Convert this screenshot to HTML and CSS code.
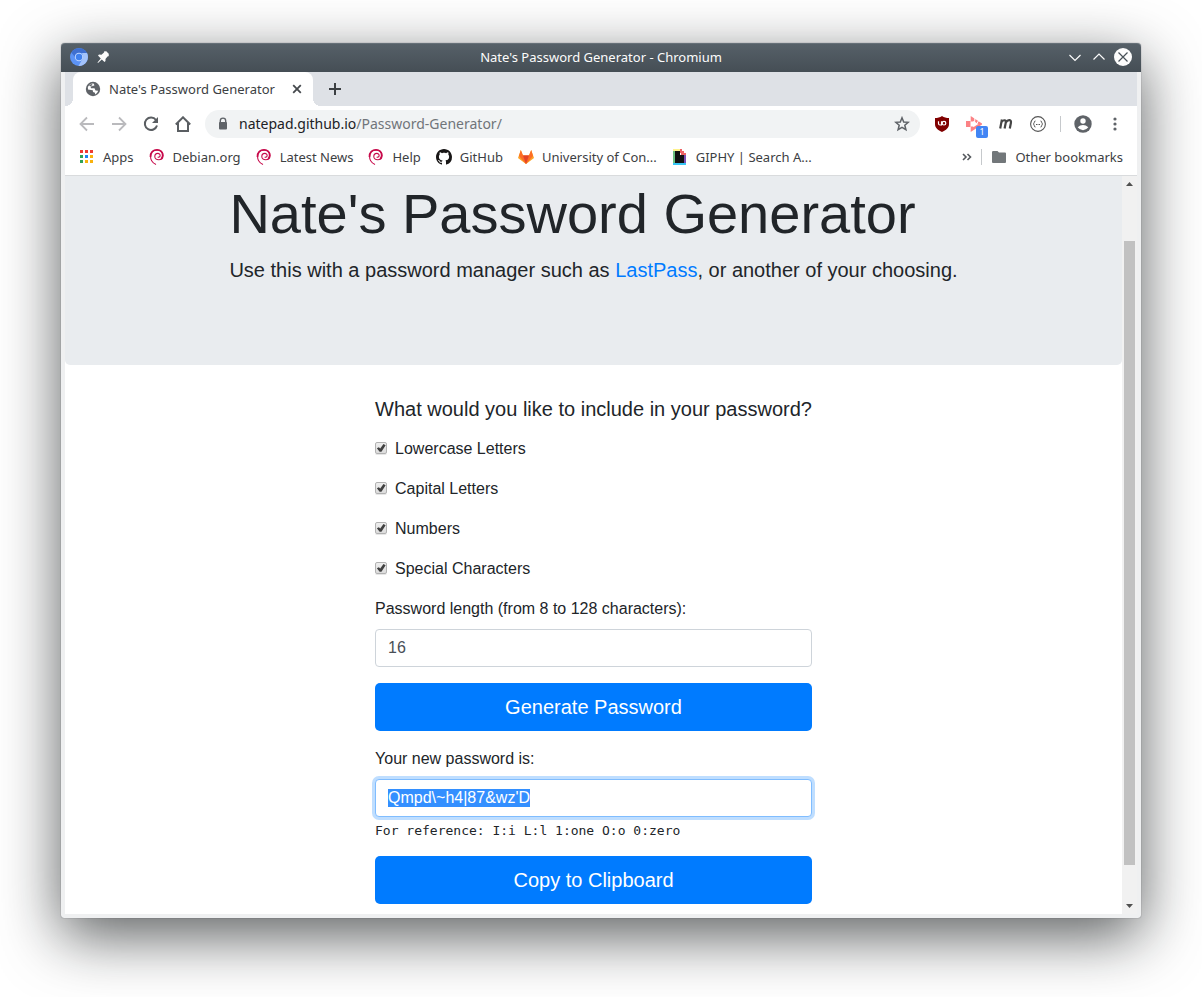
FILE: index.html
```html
<!DOCTYPE html>
<html lang="en">
<head>
<meta charset="utf-8">
<title>Nate's Password Generator</title>
<link rel="stylesheet" href="styles.css">
</head>
<body>
<svg class="defs" aria-hidden="true">
  <symbol id="debian" viewBox="0 0 16 16">
    <path d="M7 15.500C3.600 14 1.500 10.500 1.500 7C1.500 3 4.500 1 8.200 1C12 1 14 3.600 14 6.500C14 9.500 12 10.800 9.700 10.800C7.300 10.800 5.800 9.500 5.800 7.500C5.800 5.500 7.200 4.400 8.800 4.400C10.300 4.400 11.300 5.400 11.100 6.800C10.900 8 9.700 8.600 8.700 8" fill="none" stroke="#c70a4b" stroke-width="1.100"/>
    <path d="M1.500 8C1.300 3 4.500 .9 8 .9C11.500 .9 13.800 3 13.700 6.500C13.600 8 13 9 12 9.800" fill="none" stroke="#c70a4b" stroke-width="1.700"/>
  </symbol>
</svg>
<div class="window">
  <header class="titlebar">
    <div class="titlebar-side">
      <svg width="18" height="18" viewBox="0 0 18 18"><circle cx="9" cy="9" r="9" fill="#5c93f5"/><path d="M1.300 4.500A9 9 0 0 1 17 5H9A4 4 0 0 0 5 9Z" fill="#3f6fd0"/><path d="M17 5A9 9 0 0 1 8.500 18L12.500 11Q14 8 12 5Z" fill="#a3c3fb"/><circle cx="9" cy="9" r="4.200" fill="#bdd4ff"/><circle cx="9" cy="9" r="3.200" fill="#3f80ee"/></svg>
      <svg width="14" height="14" viewBox="0 0 14 14" fill="#fcfcfc"><path d="M8.500 1L9.300 1.500L10 1L13 4L12.500 5L13 6L11.500 6.500L9.500 9L9.500 11L8.500 12L5.800 9.500L2 13L1.500 12.500L4.800 8.500L2 5.500L3 4.600L5.500 4.700L8 2.500Z"/></svg>
    </div>
    <span class="titlebar-text">Nate's Password Generator - Chromium</span>
    <div class="titlebar-side titlebar-controls">
      <button type="button" aria-label="Minimize"><svg width="18" height="18" viewBox="0 0 18 18"><path d="M3.500 7L9 12.500L14.500 7" fill="none" stroke="#fcfcfc" stroke-width="1.200"/></svg></button>
      <button type="button" aria-label="Maximize"><svg width="18" height="18" viewBox="0 0 18 18"><path d="M3.500 11.500L9 6L14.500 11.500" fill="none" stroke="#fcfcfc" stroke-width="1.200"/></svg></button>
      <button type="button" aria-label="Close"><svg width="18" height="18" viewBox="0 0 18 18"><circle cx="9" cy="9" r="9" fill="#fcfcfc"/><path d="M4.500 4.500L13.500 13.500M13.500 4.500L4.500 13.500" stroke="#475057" stroke-width="1.200"/></svg></button>
    </div>
  </header>
  <div class="browser">
    <div class="tabs">
      <div class="tab">
        <svg width="16" height="16" viewBox="0 0 16 16"><circle cx="8" cy="8" r="7.200" fill="#5f6368"/><path d="M8.500 2.500L9.500 4.200L8 5L5.500 5.500L6 7.200L9.500 7.200L10.500 9.500L13.200 9.800Q12.500 12.300 10 13.500L10 11.800L8 11L7.800 9.300L3 8.500Q2.300 5.500 4.500 3.800Q6 2.400 8.500 2.500Z" fill="#fff"/><path d="M4 4L7 3L7.500 4.200L5 5.300ZM2.500 9.500L6.500 10.200L7.300 13L5 13Z" fill="#5f6368"/></svg>
        <span class="tab-title">Nate's Password Generator</span>
        <button type="button" aria-label="Close tab"><svg width="10" height="10" viewBox="0 0 10 10"><path d="M1.200 1.200L8.800 8.800M8.800 1.200L1.200 8.800" stroke="#45494d" stroke-width="1.800"/></svg></button>
      </div>
      <button type="button" class="new-tab" aria-label="New tab"><svg width="12" height="12" viewBox="0 0 12 12"><path d="M6 0V12M0 6H12" stroke="#3c4043" stroke-width="2"/></svg></button>
    </div>
    <nav class="toolbar" aria-label="Browser">
      <button type="button" aria-label="Back"><svg width="16" height="16" viewBox="0 0 16 16"><path d="M15 8H2M8 1.500L1.500 8L8 14.500" fill="none" stroke="#bababd" stroke-width="1.800"/></svg></button>
      <button type="button" aria-label="Forward"><svg width="16" height="16" viewBox="0 0 16 16"><path d="M1 8H14M8 1.500L14.500 8L8 14.500" fill="none" stroke="#bababd" stroke-width="1.800"/></svg></button>
      <button type="button" aria-label="Reload"><svg width="16" height="16" viewBox="0 0 16 16"><path d="M13 4A6.200 6.200 0 1 0 14 9.500" fill="none" stroke="#5a5e62" stroke-width="2"/><path d="M15 1V7H9Z" fill="#5a5e62"/></svg></button>
      <button type="button" aria-label="Home"><svg width="16" height="16" viewBox="0 0 16 16"><path d="M0.800 8.500L8 1.300L15.200 8.500M3 7V15H13V7" fill="none" stroke="#5a5e62" stroke-width="2"/></svg></button>
      <div class="omnibox">
        <svg width="16" height="16" viewBox="0 0 16 16"><path d="M5.300 7V4.800A2.700 2.700 0 0 1 10.700 4.800V7" fill="none" stroke="#5f6368" stroke-width="1.400"/><rect x="4" y="6" width="8" height="7.500" rx="1" fill="#5f6368"/></svg>
        <span class="url">natepad.github.io<span class="url-path">/Password-Generator/</span></span>
        <button type="button" aria-label="Bookmark this page"><svg width="16" height="16" viewBox="0 0 16 16"><path d="M8 1.800L9.700 6L14.200 6.300L10.800 9.200L11.900 13.700L8 11.300L4.100 13.700L5.200 9.200L1.800 6.300L6.300 6Z" fill="none" stroke="#5f6368" stroke-width="1.500"/></svg></button>
      </div>
      <button type="button" aria-label="uBlock Origin"><svg width="16" height="16" viewBox="0 0 16 16"><path d="M8 0C6 1.600 3.500 2 1 2V8C1 12 4 14 8 16C12 14 15 12 15 8V2C12.500 2 10 1.600 8 0Z" fill="#800000"/><path d="M4.500 5.200V7.500Q4.500 9 6 9H7.500V5.200" fill="none" stroke="#fff" stroke-width="1.200"/><circle cx="10" cy="7.200" r="1.800" fill="none" stroke="#fff" stroke-width="1.200"/></svg></button>
      <button type="button" class="badged" aria-label="Video downloader"><svg width="16" height="16" viewBox="0 0 16 16"><path d="M0 5H4.500V11H0Z" fill="#fb8285"/><path d="M6 5.500V2.500L14.500 8L6 13.500V10.500" fill="none" stroke="#fb8285" stroke-width="2.600"/><path d="M9 1L8.500 7M13 4L10 9" stroke="#fff"/></svg><span class="badge">1</span></button>
      <button type="button" aria-label="Extension m"><svg width="16" height="16" viewBox="0 0 16 16"><path d="M2.200 12.500L3.900 3.500M3.500 6Q5.200 3.900 6.800 4.300Q8.200 4.700 7.700 7L6.600 12.500M7.700 6.500Q9.600 3.900 11.500 4.200Q13.400 4.500 12.900 7L11.800 12.500" fill="none" stroke="#454545" stroke-width="2.200"/></svg></button>
      <button type="button" aria-label="Extension braces"><svg width="16" height="16" viewBox="0 0 16 16" fill="none" stroke="#555"><circle cx="8" cy="8" r="7.400" stroke-width="1.100"/><path d="M5.500 5Q4.300 5 4.300 6.300T3.300 8Q4.300 8.300 4.300 9.700T5.500 11M10.500 5Q11.700 5 11.700 6.300T12.700 8Q11.700 8.300 11.700 9.700T10.500 11"/><path d="M6 8.500H10" stroke-dasharray="1 .5"/></svg></button>
      <span class="divider"></span>
      <button type="button" class="profile" aria-label="Profile"><svg width="18" height="18" viewBox="0 0 18 18"><circle cx="9" cy="9" r="8.700" fill="#5f6368"/><circle cx="9" cy="6" r="2.700" fill="#fff"/><path d="M3.700 12.300Q6 10 9 10T14.300 12.300Q12.200 15.200 9 15.200T3.700 12.300Z" fill="#fff"/></svg></button>
      <button type="button" aria-label="Menu"><svg width="16" height="16" viewBox="0 0 16 16" fill="#5f6368"><circle cx="8" cy="3" r="1.600"/><circle cx="8" cy="8" r="1.600"/><circle cx="8" cy="13" r="1.600"/></svg></button>
    </nav>
    <nav class="bookmarks" aria-label="Bookmarks">
      <a href="#"><svg width="16" height="16" viewBox="0 0 16 16"><path d="M1 1h3v3H1zM6 1h3v3H6zM11 1h3v3h-3z" fill="#ee3b33"/><path d="M1 6h3v3H1zM1 11h3v3H1z" fill="#2fa255"/><path d="M6 6h3v3H6z" fill="#1a84f2"/><path d="M11 6h3v3h-3zM6 11h3v3H6zM11 11h3v3h-3z" fill="#f9b10c"/></svg>Apps</a>
      <a href="#"><svg width="16" height="16"><use href="#debian"/></svg>Debian.org</a>
      <a href="#"><svg width="16" height="16"><use href="#debian"/></svg>Latest News</a>
      <a href="#"><svg width="16" height="16"><use href="#debian"/></svg>Help</a>
      <a href="#"><svg width="16" height="16" viewBox="0 0 16 16"><path fill="#181616" d="M8 0C3.580 0 0 3.580 0 8c0 3.540 2.290 6.530 5.470 7.590.4.070.55-.17.55-.38 0-.19-.01-.82-.01-1.490-2.010.37-2.530-.49-2.690-.94-.09-.23-.48-.94-.82-1.130-.28-.15-.68-.52-.01-.53.63-.01 1.080.58 1.230.82.72 1.210 1.870.87 2.330.66.07-.52.28-.87.51-1.070-1.780-.2-3.640-.89-3.640-3.950 0-.87.31-1.590.82-2.150-.08-.2-.36-1.020.08-2.120 0 0 .67-.21 2.200.82.64-.18 1.320-.27 2-.27s1.360.09 2 .27c1.530-1.040 2.200-.82 2.200-.82.44 1.100.16 1.920.08 2.120.51.56.82 1.270.82 2.150 0 3.070-1.870 3.750-3.650 3.950.29.25.54.73.54 1.480 0 1.070-.01 1.930-.01 2.200 0 .21.15.46.55.38A8.010 8.010 0 0 0 16 8c0-4.420-3.580-8-8-8z"/></svg>GitHub</a>
      <a href="#"><svg width="16" height="16" viewBox="0 0 16 16"><path d="M8 15L0 9L2.800 1L5 6.500H11L13.200 1L16 9Z" fill="#fca326"/><path d="M8 15L1 7L2.800 1L5 6.500H11L13.200 1L15 7Z" fill="#fc6d26"/><path d="M8 15L5 6.500H11Z" fill="#e24329"/></svg>University of Con...</a>
      <a href="#"><svg width="16" height="16" viewBox="0 0 16 16"><path d="M1 2h2v12H1z" fill="#6bbf80"/><path d="M1 0h7v2H1z" fill="#fff28c"/><path d="M12 6h2v8h-2z" fill="#7b4fb5"/><path d="M1 14h13v2H1z" fill="#35c5f5"/><path d="M3 2h5v4h4v8H3z" fill="#121212"/><path d="M8 0h2v2h2v2h2v2H9V4H8z" fill="#ef6265"/></svg>GIPHY | Search A...</a>
      <button type="button" class="more" aria-label="More bookmarks"><svg width="10" height="10" viewBox="0 0 10 10"><path d="M1 2L4 5L1 8M5.500 2L8.500 5L5.500 8" fill="none" stroke="#55595e" stroke-width="1.600"/></svg></button>
      <span class="divider"></span>
      <a href="#"><svg width="16" height="16" viewBox="0 0 16 16"><path d="M2.200 2H6.500L8 3.500H14Q15 3.500 15 4.500V13Q15 14 14 14H2Q1 14 1 13V3.200Q1 2 2.200 2Z" fill="#72777a"/></svg>Other bookmarks</a>
    </nav>
    <div class="viewport">
      <main class="page">
        <section class="hero">
          <div class="hero-text">
            <h1>Nate's Password Generator</h1>
            <p>Use this with a password manager such as <a href="#">LastPass</a>, or another of your choosing.</p>
          </div>
        </section>
        <form class="form">
          <p class="question">What would you like to include in your password?</p>
          <label class="check"><input type="checkbox" checked>Lowercase Letters</label>
          <label class="check"><input type="checkbox" checked>Capital Letters</label>
          <label class="check"><input type="checkbox" checked>Numbers</label>
          <label class="check"><input type="checkbox" checked>Special Characters</label>
          <div class="field">
            <label for="length">Password length (from 8 to 128 characters):</label>
            <input id="length" type="text" inputmode="numeric" value="16">
          </div>
          <button type="button" class="primary">Generate Password</button>
          <div class="field">
            <label for="password">Your new password is:</label>
            <input id="password" class="result" type="text" spellcheck="false" value="Qmpd\~h4|87&amp;wz'D">
            <small>For reference: I:i L:l 1:one O:o 0:zero</small>
          </div>
          <button type="button" class="primary">Copy to Clipboard</button>
        </form>
      </main>
      <div class="scrollbar" aria-hidden="true">
        <svg width="15" height="15" viewBox="0 0 15 15"><path d="M4 10L7.500 6L11 10Z" fill="#505050"/></svg>
        <div class="track"><div class="thumb"></div></div>
        <svg width="15" height="15" viewBox="0 0 15 15"><path d="M4 5L7.500 9L11 5Z" fill="#505050"/></svg>
      </div>
    </div>
  </div>
</div>
<script src="script.js"></script>
</body>
</html>
```
FILE: script.js
```js
document.getElementById('password').select();
```
FILE: styles.css
```css
* { box-sizing: border-box; }
body {
  margin: 0;
  min-height: 100vh;
  padding: 43px 61px 79px;
  display: flex;
  background: #fff;
  font-family: "Noto Sans", sans-serif;
  font-size: 13px;
  color: #3c4043;
}
svg { display: block; flex: none; }
button { padding: 0; border: 0; background: none; font: inherit; color: inherit; }
.defs { position: absolute; width: 0; height: 0; }

.window {
  flex: 1;
  min-width: 0;
  display: flex;
  flex-direction: column;
  border-radius: 4px 4px 3px 3px;
  background: #eff0f1;
  box-shadow: 0 0 1px rgba(40, 48, 54, .8), 0 18px 60px rgba(12, 16, 18, .68);
}
.titlebar {
  height: 29px;
  padding: 0 9px 2px;
  display: flex;
  align-items: center;
  border-radius: 4px 4px 0 0;
  background: linear-gradient(#566068, #454e55);
  border-top: 1px solid #667078;
  color: #fcfcfc;
}
.titlebar-side { flex: 1; display: flex; align-items: center; gap: 8px; }
.titlebar-controls { justify-content: flex-end; gap: 6px; }

.browser {
  flex: 1;
  display: flex;
  flex-direction: column;
  margin: 0 4px 4px;
  background: #fff;
}
.tabs { display: flex; align-items: center; height: 34px; padding-left: 8px; background: #dee1e6; }
.tab {
  position: relative;
  width: 240px;
  height: 34px;
  padding: 0 11px 0 12px;
  display: flex;
  align-items: center;
  gap: 8px;
  background: #fff;
  border-radius: 8px 8px 0 0;
}
.tab::before, .tab::after {
  content: "";
  position: absolute;
  bottom: 0;
  width: 8px;
  height: 8px;
}
.tab::before { left: -8px; background: radial-gradient(circle at 0 0, #dee1e6 8px, #fff 8px); }
.tab::after { right: -8px; background: radial-gradient(circle at 100% 0, #dee1e6 8px, #fff 8px); }
.tab-title { flex: 1; }
.new-tab { margin-left: 16px; }

.toolbar { display: flex; align-items: center; gap: 16px; height: 36px; padding: 0 14px; font-size: 14px; }
.toolbar .divider { margin: 0 -2px; }
.profile { margin: 0 -1px; }
.omnibox {
  flex: 1;
  height: 28px;
  margin: 0 -2px;
  padding: 0 10px;
  display: flex;
  align-items: center;
  gap: 8px;
  border-radius: 14px;
  background: #f1f3f4;
}
.url { flex: 1; padding-bottom: 2px; color: #202124; }
.url-path { color: #70757a; }
.badged { position: relative; }
.badge {
  position: absolute;
  left: 10px;
  top: 10px;
  width: 12px;
  height: 12px;
  border-radius: 2px;
  background: #4285f4;
  color: #fff;
  font-size: 9px;
  line-height: 12px;
}
.divider { width: 1px; height: 16px; background: #c6c9cc; }

.bookmarks {
  display: flex;
  align-items: center;
  gap: 15px;
  height: 34px;
  padding: 0 14px 3px;
  border-bottom: 1px solid #d9dbdd;
}
.bookmarks a { display: flex; align-items: center; gap: 8px; color: inherit; text-decoration: none; white-space: nowrap; }
.bookmarks .more { margin-left: auto; }
.bookmarks .divider { margin: 0 -6px; }

.viewport { flex: 1; display: flex; font-family: "Liberation Sans", Arial, sans-serif; font-size: 16px; line-height: 24px; color: #212529; }
.page { flex: 1; min-width: 0; }
.hero { padding: 4px 16px 80px; background: #e9ecef; border-radius: 0 0 5px 5px; }
.hero-text { width: fit-content; margin: 0 auto; }
h1 { margin: 0 0 8px; font-size: 56px; line-height: 67px; font-weight: 400; }
.hero p, .question { margin: 0; font-size: 20px; line-height: 30px; }
.hero a { color: #007bff; text-decoration: none; }

.form { width: fit-content; margin: 0 auto; padding: 29px 0 10px; display: flex; flex-direction: column; gap: 16px; }
.form .question { margin-bottom: -3px; }
.check { display: flex; align-items: center; gap: 8px; }
.check input {
  appearance: none;
  width: 12px;
  height: 12px;
  margin: 0 0 2px;
  border: 1px solid #b2b2b2;
  border-radius: 2px;
  background: linear-gradient(#eee, #dcdcdc);
  box-shadow: 0 1px 0 #e6e6e6;
}
.check input:checked::before {
  content: "";
  display: block;
  width: 10px;
  height: 10px;
  background: #404040;
  clip-path: polygon(8% 52%, 28% 42%, 42% 56%, 74% 10%, 96% 22%, 54% 88%, 36% 88%);
}
.field { display: flex; flex-direction: column; }
.field label { margin-bottom: 8px; }
.field input {
  width: 100%;
  height: 38px;
  padding: 6px 12px;
  border: 1px solid #ced4da;
  border-radius: 4px;
  background: #fff;
  font: inherit;
  color: #495057;
  outline: 0;
}
.field .result { border-color: #80bdff; box-shadow: 0 0 0 3px #bfdeff; }
.field .result::selection { background: #338fff; color: #fff; }
.field small { margin: 4px 0 -1px; font-family: "DejaVu Sans Mono", monospace; font-size: 13px; line-height: 20px; }
.primary { height: 48px; border-radius: 5px; background: #007bff; color: #fff; font-size: 20px; line-height: 30px; }

.scrollbar { width: 15px; display: flex; flex-direction: column; background: #f1f1f1; }
.track { flex: 1; display: flex; flex-direction: column; padding: 50px 2px 34px; }
.thumb { flex: 1; background: #c1c1c1; }
```
